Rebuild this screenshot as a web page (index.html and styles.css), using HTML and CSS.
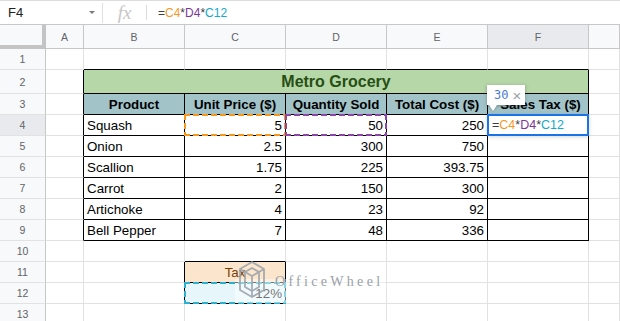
FILE: index.html
```html
<!DOCTYPE html>
<html>
<head>
<meta charset="utf-8">
<link rel="stylesheet" href="styles.css">
</head>
<body>
<div class="app">
  <div class="fbar">
    <div class="namebox"><span>F4</span><span class="caret"></span></div>
    <div class="sep1"></div>
    <div class="fx">fx</div>
    <div class="sep2"></div>
    <div class="formula">=<span class="r1">C4</span>*<span class="r2">D4</span>*<span class="r3">C12</span></div>
  </div>
  <div class="sheet">
    <!-- header row -->
    <div class="c corner"></div>
    <div class="c h">A</div>
    <div class="c h">B</div>
    <div class="c h">C</div>
    <div class="c h">D</div>
    <div class="c h">E</div>
    <div class="c h sel">F</div>
    <div class="c h"></div>
    <!-- row 1 -->
    <div class="c rh">1</div>
    <div class="c"></div>
    <div class="c tb"></div>
    <div class="c tb"></div>
    <div class="c tb"></div>
    <div class="c tb"></div>
    <div class="c tb"></div>
    <div class="c"></div>
    <!-- row 2 -->
    <div class="c rh">2</div>
    <div class="c tr"></div>
    <div class="c t title">Metro Grocery</div>
    <div class="c"></div>
    <!-- row 3 -->
    <div class="c rh">3</div>
    <div class="c tr"></div>
    <div class="c t th">Product</div>
    <div class="c t th">Unit Price ($)</div>
    <div class="c t th">Quantity Sold</div>
    <div class="c t th">Total Cost ($)</div>
    <div class="c t th th-f">Sales Tax ($)</div>
    <div class="c"></div>
    <!-- row 4 -->
    <div class="c rh sel">4</div>
    <div class="c tr"></div>
    <div class="c t">Squash</div>
    <div class="c t num ref ref-o">5</div>
    <div class="c t num ref ref-p">50</div>
    <div class="c t num">250</div>
    <div class="c t edit">
      <span class="etext">=<span class="r1">C4</span>*<span class="r2">D4</span>*<span class="r3">C12</span></span>
      <div class="tip"><span class="tipnum">30</span><span class="tipx">×</span></div>
    </div>
    <div class="c"></div>
    <!-- row 5 -->
    <div class="c rh">5</div>
    <div class="c tr"></div>
    <div class="c t">Onion</div>
    <div class="c t num">2.5</div>
    <div class="c t num">300</div>
    <div class="c t num">750</div>
    <div class="c t"></div>
    <div class="c"></div>
    <!-- row 6 -->
    <div class="c rh">6</div>
    <div class="c tr"></div>
    <div class="c t">Scallion</div>
    <div class="c t num">1.75</div>
    <div class="c t num">225</div>
    <div class="c t num">393.75</div>
    <div class="c t"></div>
    <div class="c"></div>
    <!-- row 7 -->
    <div class="c rh">7</div>
    <div class="c tr"></div>
    <div class="c t">Carrot</div>
    <div class="c t num">2</div>
    <div class="c t num">150</div>
    <div class="c t num">300</div>
    <div class="c t"></div>
    <div class="c"></div>
    <!-- row 8 -->
    <div class="c rh">8</div>
    <div class="c tr"></div>
    <div class="c t">Artichoke</div>
    <div class="c t num">4</div>
    <div class="c t num">23</div>
    <div class="c t num">92</div>
    <div class="c t"></div>
    <div class="c"></div>
    <!-- row 9 -->
    <div class="c rh">9</div>
    <div class="c tr"></div>
    <div class="c t">Bell Pepper</div>
    <div class="c t num">7</div>
    <div class="c t num">48</div>
    <div class="c t num">336</div>
    <div class="c t"></div>
    <div class="c"></div>
    <!-- row 10 -->
    <div class="c rh">10</div>
    <div class="c"></div>
    <div class="c"></div>
    <div class="c tb"></div>
    <div class="c"></div>
    <div class="c"></div>
    <div class="c"></div>
    <div class="c"></div>
    <!-- row 11 -->
    <div class="c rh">11</div>
    <div class="c"></div>
    <div class="c tr"></div>
    <div class="c t tax">Tax</div>
    <div class="c"></div>
    <div class="c"></div>
    <div class="c"></div>
    <div class="c"></div>
    <!-- row 12 -->
    <div class="c rh">12</div>
    <div class="c"></div>
    <div class="c tr"></div>
    <div class="c t num ref ref-b tint">12%</div>
    <div class="c"></div>
    <div class="c"></div>
    <div class="c"></div>
    <div class="c"></div>
    <!-- row 13 -->
    <div class="c rh">13</div>
    <div class="c"></div>
    <div class="c"></div>
    <div class="c"></div>
    <div class="c"></div>
    <div class="c"></div>
    <div class="c"></div>
    <div class="c"></div>
  </div>
  <div class="wm">
    <div class="wm-band"></div>
    <svg class="wm-logo" width="28" height="40" viewBox="0 0 28 40">
      <g fill="none" stroke="#9aa0a8" stroke-width="1.8" stroke-linejoin="round">
        <path d="M14 2 L26 9 L26 30 L14 37 L2 30 L2 9 Z"/>
        <path d="M14 8 L21 12 L21 27 L14 31 L7 27 L7 12 Z"/>
        <path d="M7 12 L14 16 L21 12 M14 16 L14 31"/>
        <path d="M2 9 L7 12 M26 9 L21 12 M14 37 L14 31"/>
      </g>
    </svg>
    <div class="wm-text">OfficeWheel</div>
  </div>
</div>
</body>
</html>
```
FILE: styles.css
```css
* { box-sizing: border-box; }
body {
  margin: 0;
  background: #fff;
  font-family: Arial, "Liberation Sans", sans-serif;
}
.app {
  position: relative;
  width: 620px;
  height: 321px;
  overflow: hidden;
}

/* formula bar */
.fbar {
  display: flex;
  align-items: center;
  height: 25px;
  border-top: 1px solid #dadce0;
  border-bottom: 1px solid #c7c7c7;
}
.namebox {
  width: 102px;
  display: flex;
  align-items: center;
  padding-left: 8px;
  padding-right: 7px;
  font-size: 13px;
  color: #202124;
}
.caret {
  margin-left: auto;
  width: 0;
  height: 0;
  border-left: 3px solid transparent;
  border-right: 3px solid transparent;
  border-top: 3px solid #7a7a7a;
}
.sep1 { width: 1px; height: 20px; background: #e0e0e0; }
.fx {
  width: 43px;
  text-align: center;
  font-family: "Liberation Serif", serif;
  font-style: italic;
  font-size: 19px;
  line-height: 20px;
  color: #c6c6c6;
}
.sep2 { width: 1px; height: 15px; background: #dadce0; }
.formula {
  padding-left: 11px;
  font-size: 12px;
  color: #3c4043;
}
.r1 { color: #f7981d; }
.r2 { color: #7e3794; }
.r3 { color: #11a9cc; }

/* grid */
.sheet {
  display: grid;
  grid-template-columns: 46px 38px repeat(5, 101px) 1fr;
  grid-template-rows: 24px 21px 24px repeat(11, 21px);
}
.c {
  border-right: 1px solid #e2e2e2;
  border-bottom: 1px solid #e2e2e2;
  display: flex;
  align-items: center;
  padding: 0 3px;
  font-size: 13.33px;
  color: #000;
  white-space: nowrap;
}
.h, .rh {
  background: #f8f9fa;
  justify-content: center;
  font-size: 10.5px;
  color: #5f6368;
  padding: 0;
}
.h { border-right-color: #c7c7c7; border-bottom-color: #c7c7c7; }
.rh { border-right-color: #c7c7c7; border-bottom-color: #e2e2e2; }
.corner {
  background: #f8f9fa;
  border-right: 4px solid #c4c4c4;
  border-bottom: 4px solid #c4c4c4;
}
.sel { background: #e8eaed; }

.tr { border-right-color: #000; }
.tb { border-bottom-color: #000; }
.t { border-right-color: #000; border-bottom-color: #000; }
.num { justify-content: flex-end; }

.title {
  grid-column: span 5;
  background: #b6d7a8;
  justify-content: center;
  font-weight: bold;
  font-size: 16px;
  color: #274e13;
}
.th {
  background: #a2c4c9;
  justify-content: center;
  font-weight: bold;
}
.th-f { padding-left: 8px; }
.tax {
  background: #fce5cd;
  color: #783f04;
  justify-content: center;
}
.tint { background: #e6f6fb; }

/* referenced range highlights */
.ref { position: relative; }
.ref::after {
  content: "";
  position: absolute;
  top: -1px;
  left: -1px;
  right: -1px;
  bottom: -1px;
  z-index: 2;
  background:
    repeating-linear-gradient(90deg, var(--rc) 0 6px, transparent 6px 9px) left top / 100% 2px no-repeat,
    repeating-linear-gradient(90deg, var(--rc) 0 6px, transparent 6px 9px) left bottom / 100% 2px no-repeat,
    repeating-linear-gradient(180deg, var(--rc) 0 6px, transparent 6px 9px) left top / 2px 100% no-repeat,
    repeating-linear-gradient(180deg, var(--rc) 0 6px, transparent 6px 9px) right top / 2px 100% no-repeat;
}
.ref-o { --rc: #f7981d; }
.ref-p { --rc: #8e44ad; }
.ref-b { --rc: #2bb0d0; }

/* active cell editor */
.edit {
  position: relative;
  padding-left: 4px;
}
.edit::after {
  content: "";
  position: absolute;
  top: -1px;
  left: -1px;
  right: -1px;
  bottom: -1px;
  border: 2px solid #1a73e8;
  box-shadow: 0 1px 4px rgba(60, 64, 67, 0.2);
  z-index: 2;
}
.etext {
  font-size: 12.5px;
  color: #3c4043;
  position: relative;
  z-index: 3;
}
.tip {
  position: absolute;
  left: -1px;
  bottom: 30px;
  width: 38px;
  height: 20px;
  background: #fff;
  box-shadow: 0 1px 2px rgba(60, 64, 67, 0.3), 0 1px 4px 1px rgba(60, 64, 67, 0.15);
  display: flex;
  align-items: center;
  padding-left: 7px;
  gap: 4px;
  z-index: 4;
}
.tip::after {
  content: "";
  position: absolute;
  left: 2px;
  top: 100%;
  width: 0;
  height: 0;
  border-left: 4px solid transparent;
  border-right: 4px solid transparent;
  border-top: 6px solid #fff;
  filter: drop-shadow(0 1px 1px rgba(60, 64, 67, 0.25));
}
.tipnum {
  font-family: "DejaVu Sans Mono", "Liberation Mono", monospace;
  font-size: 12px;
  color: #4a7bd6;
}
.tipx {
  font-size: 15px;
  color: #9aa0a6;
  line-height: 1;
}

/* watermark */
.wm {
  position: absolute;
  left: 235px;
  top: 257px;
  width: 150px;
  height: 46px;
  z-index: 5;
  pointer-events: none;
}
.wm-band {
  position: absolute;
  left: 0;
  right: 0;
  top: 22px;
  bottom: 0;
  background: rgba(255, 255, 255, 0.45);
}
.wm-logo {
  position: absolute;
  left: 3px;
  top: 3px;
  opacity: 0.85;
}
.wm-text {
  position: absolute;
  left: 40px;
  top: 17px;
  font-family: "Liberation Serif", serif;
  font-size: 14px;
  letter-spacing: 3.3px;
  color: #9aa0a8;
}
```
